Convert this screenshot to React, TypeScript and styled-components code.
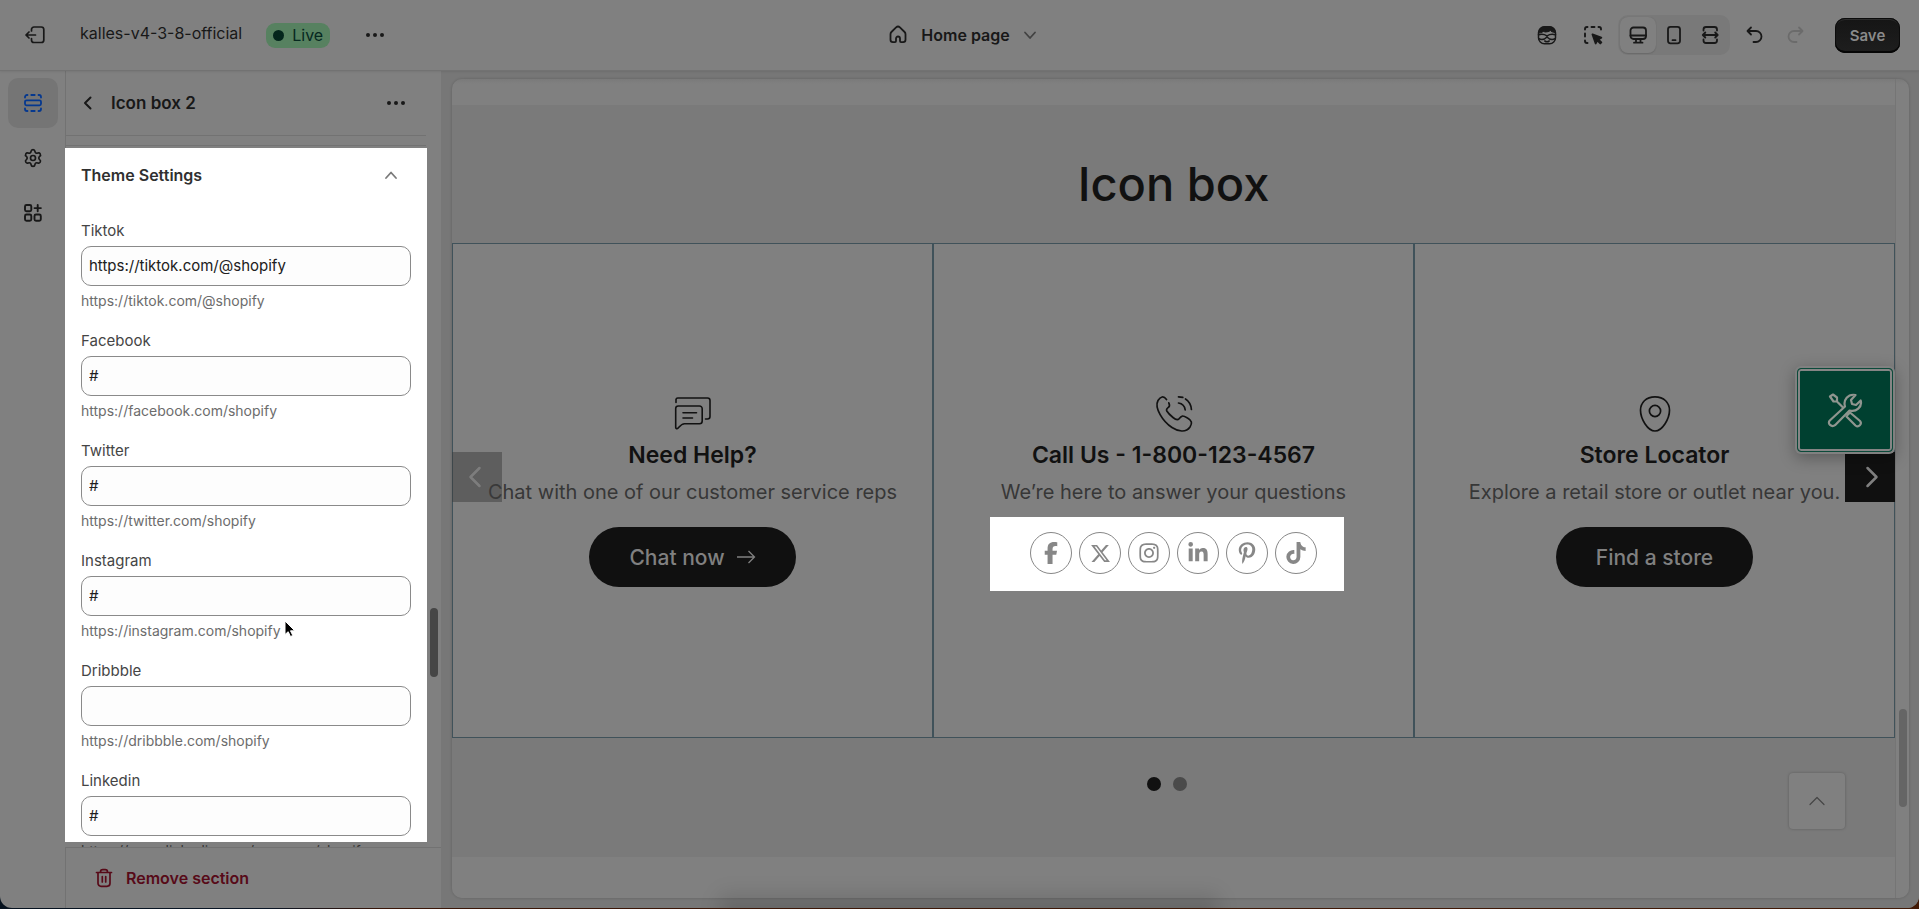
import React from "react";
import styled, { createGlobalStyle, css } from "styled-components";
import { FaFacebookF, FaXTwitter, FaInstagram, FaLinkedinIn, FaPinterestP, FaTiktok } from "react-icons/fa6";
import { Settings } from "lucide-react";

const c = {
  surface: "#808080",
  canvas: "#777777",
  section: "#7a7a7a",
  line: "#727272",
  ink: "#181818",
  strong: "#111111",
  soft: "#373737",
  cardLine: "#40525a",
};

const GlobalStyle = createGlobalStyle`
  *, *::before, *::after { box-sizing: border-box; }
  body {
    margin: 0;
    background: linear-gradient(90deg, #06121f 0, #0a1626 14%, #3a1608 20%, #421a06 100%);
    font-family: Inter, "Liberation Sans", sans-serif;
    color: ${c.ink};
  }
  button, input { font: inherit; color: inherit; }
  button { border: 0; padding: 0; background: none; cursor: pointer; }
  h1, h2, h3, p { margin: 0; }
  svg { display: block; flex: none; }
`;

const Shell = styled.div`
  position: relative;
  display: flex;
  flex-direction: column;
  height: calc(100vh - 1px);
  min-height: 600px;
  overflow: hidden;
  background: ${c.surface};
  border-radius: 0 0 12px 12px;
`;

const DockShade = styled.div`
  position: absolute;
  left: 38%;
  right: 37%;
  bottom: -4px;
  height: 8px;
  background: rgba(0, 0, 0, 0.12);
  box-shadow: 0 0 18px 10px rgba(0, 0, 0, 0.12);
  filter: blur(4px);
  pointer-events: none;
`;

const TopBar = styled.header`
  display: grid;
  grid-template-columns: 1fr auto 1fr;
  align-items: center;
  height: 71px;
  flex: none;
  padding: 0 19px 0 25px;
  border-bottom: 1px solid ${c.line};
  position: relative;
  box-shadow: 0 1px 2px rgba(0, 0, 0, 0.08);
`;

const TopLeft = styled.div`
  display: flex;
  align-items: center;
`;

const TopRight = styled.div`
  display: flex;
  align-items: center;
  justify-content: flex-end;
`;

const ThemeName = styled.span`
  margin-left: 35px;
  padding-bottom: 4px;
  font-size: 16px;
  line-height: 20px;
`;

const Badge = styled.span`
  display: inline-flex;
  align-items: center;
  gap: 8px;
  height: 25px;
  margin-left: 24px;
  padding: 0 7px;
  border-radius: 9px;
  background: #578160;
  color: #06281f;
  font-size: 16px;
  &::before {
    content: "";
    width: 11px;
    height: 11px;
    border-radius: 50%;
    background: #04261c;
  }
`;

const IconButton = styled.button<{ $gap?: number; $dim?: boolean }>`
  display: grid;
  place-items: center;
  width: 20px;
  height: 20px;
  margin-left: ${(p) => p.$gap ?? 0}px;
  color: ${(p) => (p.$dim ? "#6b6b6b" : c.ink)};
`;

const PagePicker = styled.button`
  display: flex;
  align-items: center;
  gap: 13px;
  font-size: 16px;
  font-weight: 600;
  line-height: 20px;
`;

const DeviceGroup = styled.div`
  display: flex;
  margin-left: 15px;
  padding: 2px;
  border-radius: 10px;
  background: #797979;
`;

const DeviceButton = styled.button<{ $active?: boolean }>`
  display: grid;
  place-items: center;
  width: 36px;
  height: 36px;
  border-radius: 8px;
  ${(p) =>
    p.$active &&
    css`
      background: ${c.surface};
      box-shadow: 0 1px 1px #6a6a6a, 0 0 1px #6a6a6a;
    `}
`;

const SaveButton = styled.button`
  width: 65px;
  height: 35px;
  margin-left: 30px;
  border-radius: 10px;
  background: linear-gradient(#151515, #1e1e1e);
  box-shadow: inset 0 -2px 0 #060606, inset 0 0 0 1px #0c0c0c, inset 0 2px 0 #2c2c2c;
  color: #8a8a8a;
  font-size: 15px;
  font-weight: 600;
`;

const Workspace = styled.div`
  display: flex;
  flex: 1;
  min-height: 0;
`;

const Rail = styled.nav`
  display: flex;
  flex-direction: column;
  gap: 5px;
  width: 66px;
  flex: none;
  padding: 7px 7px 0 8px;
  border-right: 1px solid ${c.line};
`;

const RailButton = styled.button<{ $active?: boolean }>`
  display: grid;
  place-items: center;
  width: 50px;
  height: 50px;
  border-radius: 10px;
  background: ${(p) => (p.$active ? "#757575" : "none")};
  color: ${(p) => (p.$active ? "#05388f" : c.ink)};
`;

const Sidebar = styled.aside`
  display: flex;
  flex-direction: column;
  width: 375px;
  flex: none;
`;

const SidebarHeader = styled.div`
  display: flex;
  align-items: center;
  height: 65px;
  flex: none;
  margin-right: 15px;
  padding: 0 20px 0 12px;
  border-bottom: 1px solid ${c.line};
`;

const SidebarTitle = styled.h1`
  flex: 1;
  margin-left: 13px;
  font-size: 17px;
  font-weight: 600;
  line-height: 22px;
`;

const Divider = styled.div`
  height: 12px;
  flex: none;
  margin-right: 15px;
  &::before {
    content: "";
    display: block;
    padding-top: 9px;
    border-bottom: 1px solid ${c.line};
  }
`;

const ScrollArea = styled.div`
  position: relative;
  display: flex;
  flex: 1;
  min-height: 0;
`;

const SettingsPane = styled.section`
  position: relative;
  width: 362px;
  margin-left: -1px;
  padding: 0 16px;
  overflow: hidden;
  background: #ffffff;
  &::after {
    content: "";
    position: absolute;
    inset: auto 0 0 0;
    height: 5px;
    background: rgba(0, 0, 0, 0.5);
  }
`;

const GroupToggle = styled.button`
  display: flex;
  align-items: center;
  justify-content: space-between;
  width: 100%;
  height: 54px;
  margin-bottom: 19px;
  padding-right: 13px;
  color: #303030;
  font-size: 16px;
  font-weight: 600;
  svg { color: #7a7a7a; }
`;

const Field = styled.div`
  display: flex;
  flex-direction: column;
  margin-bottom: 20px;
`;

const FieldLabel = styled.label`
  margin-bottom: 5px;
  color: #454545;
  font-size: 15px;
  line-height: 20px;
`;

const FieldInput = styled.input`
  width: 100%;
  height: 40px;
  padding: 0 7px 2px;
  border: 1px solid #8a8a8a;
  border-radius: 10px;
  background: #fdfdfd;
  color: #202020;
  font-size: 15px;
`;

const FieldHelp = styled.p`
  margin-top: 5px;
  color: #6c6c6c;
  font-size: 14px;
  line-height: 20px;
  white-space: nowrap;
`;

const ScrollThumb = styled.div<{ $top: number; $size: number; $tone: string }>`
  width: 8px;
  height: ${(p) => p.$size}px;
  margin: ${(p) => p.$top}px auto 0;
  border-radius: 4px;
  background: ${(p) => p.$tone};
`;

const Gutter = styled.div`
  flex: 1;
`;

const SidebarFooter = styled.footer`
  display: flex;
  align-items: center;
  height: 61px;
  flex: none;
  padding-left: 28px;
  border-top: 1px solid ${c.line};
`;

const RemoveButton = styled.button`
  display: flex;
  align-items: center;
  gap: 12px;
  color: #570a18;
  font-size: 16px;
  font-weight: 600;
`;

const Pointer = styled.svg`
  position: absolute;
  left: 218px;
  top: 472px;
`;

const Canvas = styled.main`
  display: flex;
  flex: 1;
  min-width: 0;
  padding: 8px 10px 10px 11px;
  background: ${c.canvas};
`;

const Frame = styled.div`
  display: flex;
  flex: 1;
  min-width: 0;
  overflow: hidden;
  border-radius: 10px;
  background: linear-gradient(#7a7a7a, ${c.surface} 5px);
  box-shadow: 0 0 3px rgba(0, 0, 0, 0.2);
`;

const FrameGutter = styled.div`
  width: 14px;
  flex: none;
  border-left: 1px solid #757575;
`;

const Storefront = styled.div`
  position: relative;
  flex: 1;
  min-width: 0;
  padding-top: 26px;
`;

const Section = styled.section`
  display: flex;
  flex-direction: column;
  padding-bottom: 66px;
  background: ${c.section};
`;

const SectionTitle = styled.h2`
  padding: 49px 0 29px;
  color: ${c.strong};
  font-size: 47px;
  font-weight: 500;
  line-height: 60px;
  text-align: center;
`;

const Carousel = styled.div`
  position: relative;
  display: grid;
  grid-template-columns: repeat(3, 1fr);
`;

const Card = styled.article`
  display: flex;
  flex-direction: column;
  align-items: center;
  height: 495px;
  padding-top: 150px;
  border: 1px solid ${c.cardLine};
  background: ${c.surface};
  color: ${c.strong};
`;

const CardTitle = styled.h3`
  margin-top: 3px;
  font-size: 23px;
  font-weight: 600;
  line-height: 36px;
  white-space: nowrap;
`;

const CardText = styled.p`
  margin-top: 3px;
  color: ${c.soft};
  font-size: 20px;
  line-height: 32px;
  white-space: nowrap;
`;

const PillButton = styled.button`
  display: flex;
  align-items: center;
  gap: 11px;
  height: 60px;
  margin-top: 19px;
  padding: 0 40px;
  border-radius: 30px;
  background: #101010;
  color: #808080;
  font-size: 21px;
  font-weight: 500;
`;

const SocialRow = styled.div`
  position: relative;
  isolation: isolate;
  display: flex;
  gap: 7px;
  margin-top: 24px;
  &::before {
    content: "";
    position: absolute;
    inset: -15px -27px -17px -40px;
    z-index: -1;
    background: #ffffff;
  }
`;

const SocialLink = styled.a`
  display: grid;
  place-items: center;
  width: 42px;
  height: 42px;
  border: 1px solid #878787;
  border-radius: 50%;
  color: #878787;
`;

const ArrowButton = styled.button<{ $side: "left" | "right" }>`
  position: absolute;
  top: 209px;
  ${(p) => p.$side}: 0;
  display: grid;
  place-items: center;
  width: 50px;
  height: 50px;
  background: ${(p) => (p.$side === "left" ? "rgba(60, 60, 60, 0.5)" : "#101010")};
  color: ${(p) => (p.$side === "left" ? "#7d7d7d" : "#808080")};
`;

const Dots = styled.div`
  display: flex;
  justify-content: center;
  gap: 12px;
  height: 14px;
  margin-top: 39px;
  padding-right: 14px;
`;

const Dot = styled.button<{ $active?: boolean }>`
  width: 14px;
  height: 14px;
  border-radius: 50%;
  background: ${(p) => (p.$active ? c.strong : "#4a4a4a")};
`;

const ToolButton = styled.button`
  position: absolute;
  top: 289px;
  right: 2px;
  display: grid;
  place-items: center;
  width: 96px;
  height: 84px;
  border: 1px solid #0b4a3a;
  border-radius: 4px;
  background: #004030;
  color: #8f958f;
  box-shadow: inset 0 0 0 2px #858585, 0 0 0 2px #808080, 0 4px 16px 2px rgba(0, 0, 0, 0.3);
`;

const TopButton = styled.button`
  position: absolute;
  right: 50px;
  bottom: 69px;
  display: grid;
  place-items: center;
  width: 56px;
  height: 56px;
  border-radius: 4px;
  background: ${c.surface};
  color: #454545;
  box-shadow: 0 0 3px rgba(0, 0, 0, 0.25);
`;

type IconProps = { size?: number; sw?: number; view?: number; children: React.ReactNode };
const Icon = ({ size = 20, sw = 1.6, view = 20, children }: IconProps) => (
  <svg width={size} height={size} viewBox={`0 0 ${view} ${view}`} fill="none" stroke="currentColor" strokeWidth={sw} strokeLinecap="round" strokeLinejoin="round" aria-hidden="true">
    {children}
  </svg>
);

const MoreIcon = () => (
  <Icon>
    <g fill="currentColor" stroke="none">
      <circle cx="3" cy="10" r="2" /><circle cx="10" cy="10" r="2" /><circle cx="17" cy="10" r="2" />
    </g>
  </Icon>
);

const fields = [
  { name: "Tiktok", value: "https://tiktok.com/@shopify", help: "https://tiktok.com/@shopify" },
  { name: "Facebook", value: "#", help: "https://facebook.com/shopify" },
  { name: "Twitter", value: "#", help: "https://twitter.com/shopify" },
  { name: "Instagram", value: "#", help: "https://instagram.com/shopify" },
  { name: "Dribbble", value: "", help: "https://dribbble.com/shopify" },
  { name: "Linkedin", value: "#", help: "https://www.linkedin.com/company/shopify" },
];

const socials = [
  { name: "Facebook", glyph: <FaFacebookF size={22} /> },
  { name: "X", glyph: <FaXTwitter size={21} /> },
  { name: "Instagram", glyph: <FaInstagram size={22} /> },
  { name: "LinkedIn", glyph: <FaLinkedinIn size={22} /> },
  { name: "Pinterest", glyph: <FaPinterestP size={22} /> },
  { name: "TikTok", glyph: <FaTiktok size={22} /> },
];

export default function App() {
  return (
    <>
      <GlobalStyle />
      <Shell>
        <TopBar>
          <TopLeft>
            <IconButton aria-label="Exit">
              <Icon sw={1.7}>
                <path d="M6.500 6V4.500A2.500 2.500 0 0 1 9 2h7.300A2.500 2.500 0 0 1 18.800 4.500v10.500a2.500 2.500 0 0 1-2.500 2.500H9A2.500 2.500 0 0 1 6.500 15v-1.500M1.200 10h9.300M4 7l-3 3 3 3" />
              </Icon>
            </IconButton>
            <ThemeName>kalles-v4-3-8-official</ThemeName>
            <Badge>Live</Badge>
            <IconButton $gap={35} aria-label="More theme actions"><MoreIcon /></IconButton>
          </TopLeft>
          <PagePicker>
            <Icon sw={1.8}>
              <path d="M2.500 9.300c0-.9.3-1.700.9-2.300l4.700-4.600a2.700 2.700 0 0 1 3.800 0l4.700 4.600c.6.6.9 1.400.9 2.300v5.500a2.300 2.300 0 0 1-2.300 2.300H13a1 1 0 0 1-1-1v-2.600a2 2 0 0 0-4 0v2.600a1 1 0 0 1-1 1H4.800a2.300 2.300 0 0 1-2.300-2.300z" />
            </Icon>
            Home page
            <Icon size={14} view={14} sw={1.8}><path d="M2 4.500 7 10l5-5.500" stroke="#424242" /></Icon>
          </PagePicker>
          <TopRight>
            <IconButton aria-label="Sidekick">
              <Icon sw={1.5}>
                <rect x="1.500" y="1.800" width="17" height="17" rx="6" />
                <path d="M2 7.500C2 3 5 1.500 10 1.500S18 3 18 7.500c-3-.5-4-1-4.500-2C12 6.500 10 7 7.500 7L8 5.500 4.500 7.500z" fill="currentColor" strokeWidth="1" />
                <path d="M1.500 9.800c3-1 6-.5 8.500 1 2.500-1.500 5.500-2 8.500-1M2 13.800c3 1.300 6 .3 8-1.800 2 2.100 5 3.100 8 1.800M7.800 16c1.400.9 3 .9 4.400 0" />
              </Icon>
            </IconButton>
            <IconButton $gap={26} aria-label="Inspector">
              <Icon sw={1.9}>
                <path d="M2 4.500V4a2 2 0 0 1 2-2h.5M8.500 2h3M15.500 2h.5a2 2 0 0 1 2 2v.5M2 8.500v3M2 15.500v.5a2 2 0 0 0 2 2h.5" />
                <path d="m9.500 9.500 8.800 3.200-3 1.700 3 3-1 1-3-3-1.600 3z" fill="currentColor" />
              </Icon>
            </IconButton>
            <DeviceGroup>
              <DeviceButton $active aria-label="Desktop">
                <Icon sw={1.8}><rect x="2.500" y="2.500" width="15.500" height="11.500" rx="3" /><path d="M2.500 10.500H18M8 14v3.500M12.500 14v3.500M6 17.700h8.500" /></Icon>
              </DeviceButton>
              <DeviceButton aria-label="Mobile">
                <Icon sw={1.8}><rect x="4" y="1.800" width="12" height="16.500" rx="2.500" /><path d="M8.500 15.200h3" /></Icon>
              </DeviceButton>
              <DeviceButton aria-label="Full width">
                <Icon sw={1.8}><path d="M3.500 5.500v-1A2.500 2.500 0 0 1 6 2h8.500A2.500 2.500 0 0 1 17 4.500v1M3.500 14.500v1A2.500 2.500 0 0 0 6 18h8.500a2.500 2.500 0 0 0 2.500-2.500v-1M3 10h14.500M5.300 7.500 2.800 10l2.500 2.500M15.200 7.500l2.500 2.500-2.500 2.500" /></Icon>
              </DeviceButton>
            </DeviceGroup>
            <IconButton $gap={15} aria-label="Undo">
              <Icon sw={1.8}><path d="M6 2.500 2.500 6 6 9.500M2.800 6H11a5.500 5.500 0 0 1 0 11H8.500" /></Icon>
            </IconButton>
            <IconButton $gap={20} $dim disabled aria-label="Redo">
              <Icon sw={1.8}><path d="M14 2.500 17.500 6 14 9.500M17.200 6H9a5.500 5.500 0 0 0 0 11h2.500" /></Icon>
            </IconButton>
            <SaveButton>Save</SaveButton>
          </TopRight>
        </TopBar>

        <Workspace>
          <Rail aria-label="Editor">
            <RailButton $active aria-label="Sections">
              <Icon sw={1.8}>
                <rect x="2" y="7.300" width="16" height="5" rx="1.500" />
                <path d="M2 4.500V4a2 2 0 0 1 2-2h.5M8.300 2h3.400M15.500 2h.5a2 2 0 0 1 2 2v.5M2 15.500v.5a2 2 0 0 0 2 2h.5M8.300 18h3.400M15.500 18h.5a2 2 0 0 0 2-2v-.5" />
              </Icon>
            </RailButton>
            <RailButton aria-label="Theme settings"><Settings size={20} strokeWidth={2} /></RailButton>
            <RailButton aria-label="App embeds">
              <Icon sw={1.9}>
                <rect x="2" y="2" width="6.300" height="6.300" rx="1.500" /><rect x="2" y="11.500" width="6.300" height="6.300" rx="1.500" /><rect x="11.500" y="11.500" width="6.300" height="6.300" rx="1.500" />
                <path d="M14.700 2v6.300M11.500 5.100h6.400" />
              </Icon>
            </RailButton>
          </Rail>

          <Sidebar>
            <SidebarHeader>
              <IconButton aria-label="Back"><Icon sw={2}><path d="M12.500 4.500 7 10l5.500 5.500" /></Icon></IconButton>
              <SidebarTitle>Icon box 2</SidebarTitle>
              <IconButton aria-label="More section actions"><MoreIcon /></IconButton>
            </SidebarHeader>
            <Divider />
            <ScrollArea>
              <SettingsPane>
                <GroupToggle aria-expanded="true">
                  Theme Settings
                  <Icon size={14} view={14} sw={1.8}><path d="M2 10 7 4.500 12 10" /></Icon>
                </GroupToggle>
                {fields.map((f) => (
                  <Field key={f.name}>
                    <FieldLabel htmlFor={f.name}>{f.name}</FieldLabel>
                    <FieldInput id={f.name} type="text" defaultValue={f.value} />
                    <FieldHelp>{f.help}</FieldHelp>
                  </Field>
                ))}
              </SettingsPane>
              <Gutter><ScrollThumb $top={460} $size={69} $tone="#464646" /></Gutter>
              <Pointer width="14" height="20" viewBox="0 0 14 20" aria-hidden="true">
                <path d="M1 1v13.500l3.200-2.800 2.300 4.800 2.300-1-2.300-4.700h4.300z" fill="#000" stroke="#fff" strokeWidth="1" />
              </Pointer>
            </ScrollArea>
            <SidebarFooter>
              <RemoveButton>
                <Icon sw={1.7}><path d="M2.500 4.500h15M6.500 4.500V4a2.300 2.300 0 0 1 2.300-2.300h2.400A2.300 2.300 0 0 1 13.500 4v.5M4 4.800v10.500a3 3 0 0 0 3 3h6a3 3 0 0 0 3-3V4.800M8.300 8.500v5.500M11.700 8.500v5.500" /></Icon>
                Remove section
              </RemoveButton>
            </SidebarFooter>
          </Sidebar>

          <Canvas>
            <Frame>
              <Storefront>
                <Section>
                  <SectionTitle>Icon box</SectionTitle>
                  <Carousel>
                    <Card>
                      <Icon size={40} view={40} sw={1.6}>
                        <path d="M3 8.500V5.500A1.800 1.800 0 0 1 4.800 4H34.500A2.500 2.500 0 0 1 37 6.500V22.500A2.500 2.500 0 0 1 34.500 25H32.500" />
                        <path d="M5.300 12H26.500A2.700 2.700 0 0 1 29.200 14.700V27A2.700 2.700 0 0 1 26.500 29.700H11.500C8.500 29.700 7 32 5 34.200 4.200 35 2.700 34.800 2.700 33.400V14.600A2.600 2.600 0 0 1 5.300 12zM10 18.700H23.500M10 24H19.500" />
                      </Icon>
                      <CardTitle>Need Help?</CardTitle>
                      <CardText>Chat with one of our customer service reps</CardText>
                      <PillButton>
                        Chat now
                        <svg width="20" height="14" viewBox="0 0 20 14" fill="none" stroke="currentColor" strokeWidth="1.300" aria-hidden="true"><path d="M1 7h17.500M12.500 1l6 6-6 6" /></svg>
                      </PillButton>
                    </Card>
                    <Card>
                      <Icon size={40} view={40} sw={1.7}>
                        <path d="M12.500 5.500C9.500 1.500 6.500 2.500 4 6.500 0 14 9 27.500 18 33.500c6 4 14 5.500 18-.5 2.500-4 2-6.500-2.500-9-5-3-6-2.500-8.500.8-1.500 1.500-3.500.7-6-1.300-2.500-2-5-4.500-6.200-6.500-1-2 .5-2.800 2-4 1-1 .8-2.500 0-4.200" />
                        <path d="M24.500 2.800c1.700 0 3 .2 4.300.6M31.500 5c3.500 2.300 5.600 6 5.900 10.500M24.500 9c3.700.6 6.200 3.200 6.700 6.800" />
                      </Icon>
                      <CardTitle>Call Us - 1-800-123-4567</CardTitle>
                      <CardText>We’re here to answer your questions</CardText>
                      <SocialRow>
                        {socials.map((s) => (
                          <SocialLink key={s.name} href="#" aria-label={s.name}>{s.glyph}</SocialLink>
                        ))}
                      </SocialRow>
                    </Card>
                    <Card>
                      <Icon size={40} view={40} sw={1.7}>
                        <path d="M20 2.800c-9 0-14.500 6-14.500 13.500C5.500 24.500 12.500 37 20 37s14.500-12.500 14.500-20.700C34.500 8.800 29 2.800 20 2.800z" />
                        <circle cx="20" cy="17" r="5.600" />
                      </Icon>
                      <CardTitle>Store Locator</CardTitle>
                      <CardText>Explore a retail store or outlet near you.</CardText>
                      <PillButton>Find a store</PillButton>
                    </Card>
                    <ArrowButton $side="left" aria-label="Previous"><Icon size={24} view={24}><path d="M14.500 3 5.500 12l9 9" strokeWidth="2.500" /></Icon></ArrowButton>
                    <ArrowButton $side="right" aria-label="Next"><Icon size={24} view={24}><path d="M9.500 3l9 9-9 9" strokeWidth="2.500" /></Icon></ArrowButton>
                  </Carousel>
                  <Dots>
                    <Dot $active aria-label="Slide 1" />
                    <Dot aria-label="Slide 2" />
                  </Dots>
                </Section>
                <ToolButton aria-label="Tools">
                  <Icon size={36} view={36} sw={2.2}>
                    <path d="M3 4.500 6 2.500l4 3v4l6 6M10 9.500H6.500L3 4.500M20.500 23l2.500-2.500L33 29c2.500 3-1.500 7-4.500 4.500l-9-9" />
                    <path d="M2.800 28.500 18 14.500C16 8 21 1.500 28.500 3L24 8l1 4 4 1 4.700-4.500C35.500 15 29 20.500 22.500 18.500L8 33.200c-3.500 2.500-8-1.700-5.200-4.700z" />
                  </Icon>
                </ToolButton>
                <TopButton aria-label="Back to top"><Icon size={18} view={18} sw={1.2}><path d="M2 12.500 9 5.500l7 7" /></Icon></TopButton>
              </Storefront>
              <FrameGutter><ScrollThumb $top={630} $size={98} $tone="#656565" /></FrameGutter>
            </Frame>
          </Canvas>
        </Workspace>
        <DockShade />
      </Shell>
    </>
  );
}
